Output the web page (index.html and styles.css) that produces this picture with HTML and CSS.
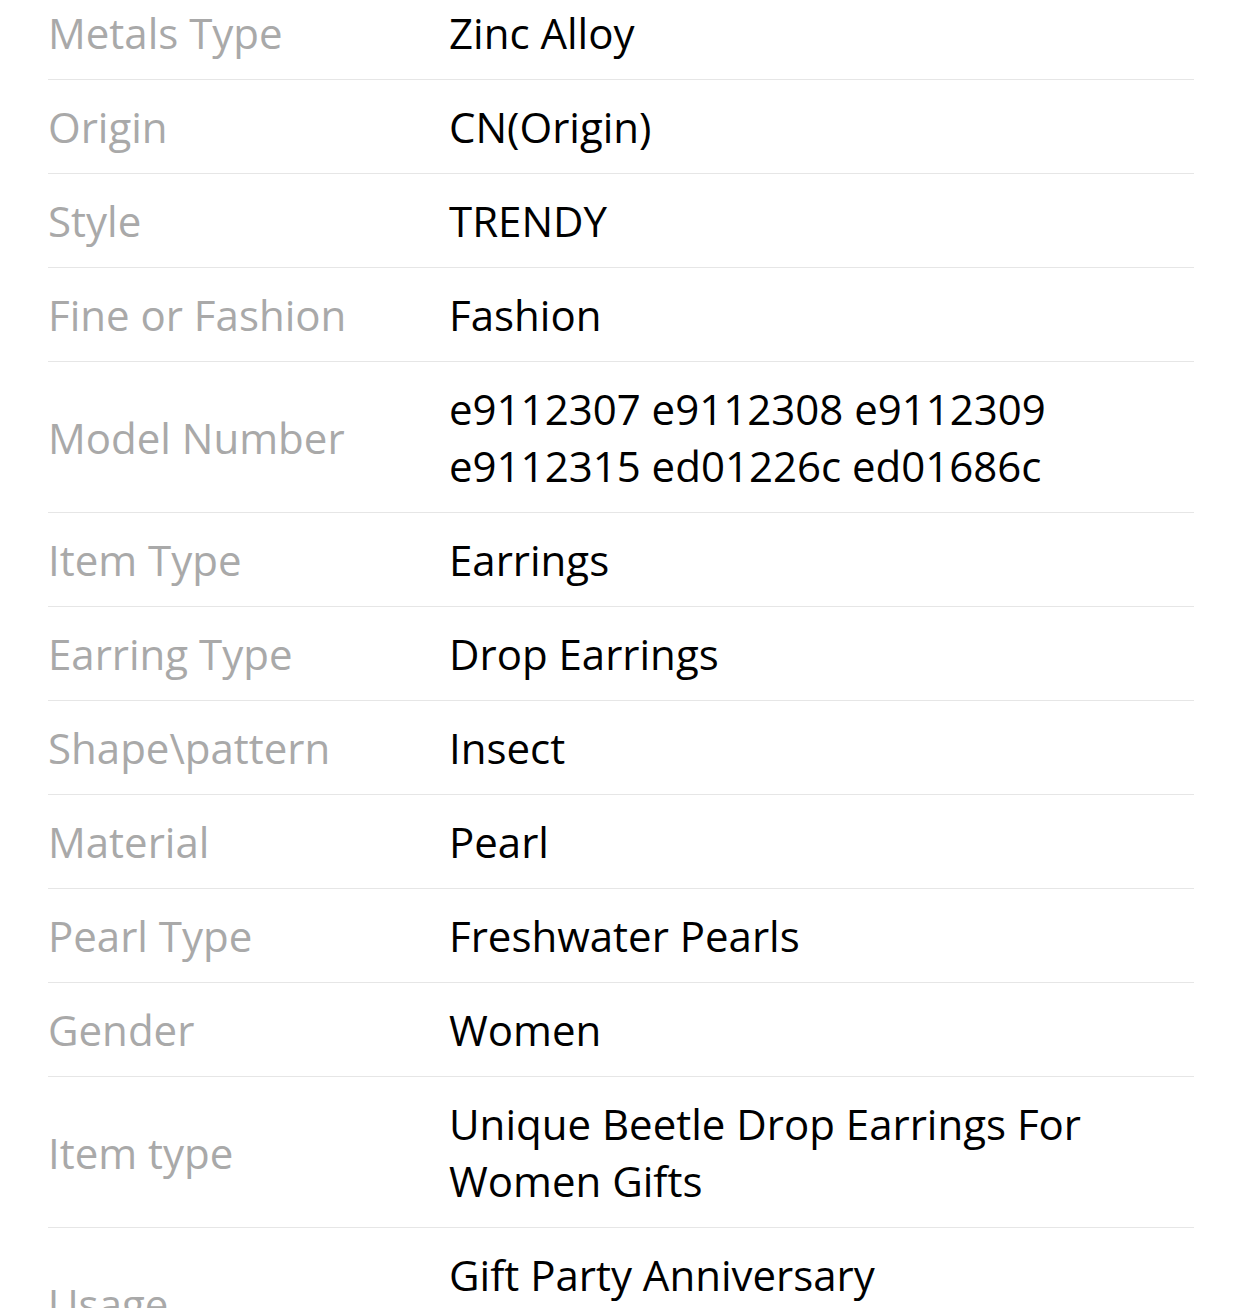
FILE: index.html
```html
<!DOCTYPE html>
<html lang="en">
<head>
<meta charset="utf-8">
<title>Specifications</title>
<link rel="stylesheet" href="styles.css">
</head>
<body>
<div class="specs">
  <div class="row"><div class="label">Metals Type</div><div class="value">Zinc Alloy</div></div>
  <div class="row"><div class="label">Origin</div><div class="value">CN(Origin)</div></div>
  <div class="row"><div class="label">Style</div><div class="value">TRENDY</div></div>
  <div class="row"><div class="label">Fine or Fashion</div><div class="value">Fashion</div></div>
  <div class="row"><div class="label">Model Number</div><div class="value">e9112307 e9112308 e9112309 e9112315 ed01226c ed01686c</div></div>
  <div class="row"><div class="label">Item Type</div><div class="value">Earrings</div></div>
  <div class="row"><div class="label">Earring Type</div><div class="value">Drop Earrings</div></div>
  <div class="row"><div class="label">Shape\pattern</div><div class="value">Insect</div></div>
  <div class="row"><div class="label">Material</div><div class="value">Pearl</div></div>
  <div class="row"><div class="label">Pearl Type</div><div class="value">Freshwater Pearls</div></div>
  <div class="row"><div class="label">Gender</div><div class="value">Women</div></div>
  <div class="row"><div class="label">Item type</div><div class="value">Unique Beetle Drop Earrings For Women Gifts</div></div>
  <div class="row"><div class="label">Usage</div><div class="value">Gift Party Anniversary Wedding,Engagement,Daily</div></div>
</div>
</body>
</html>
```

FILE: styles.css
```css
html, body {
  margin: 0;
  padding: 0;
  background: #ffffff;
}

body {
  font-family: "Open Sans", "Noto Sans", sans-serif;
  font-size: 42px;
  line-height: 57px;
  overflow: hidden;
}

.specs {
  margin: -14px 48px 0 48px;
}

.row {
  display: grid;
  grid-template-columns: 401px 1fr;
  align-items: center;
  padding: 18px 0;
  border-bottom: 1px solid #e6e6e6;
}

.label {
  color: #a9a9a9;
}

.value {
  color: #000000;
}
```
